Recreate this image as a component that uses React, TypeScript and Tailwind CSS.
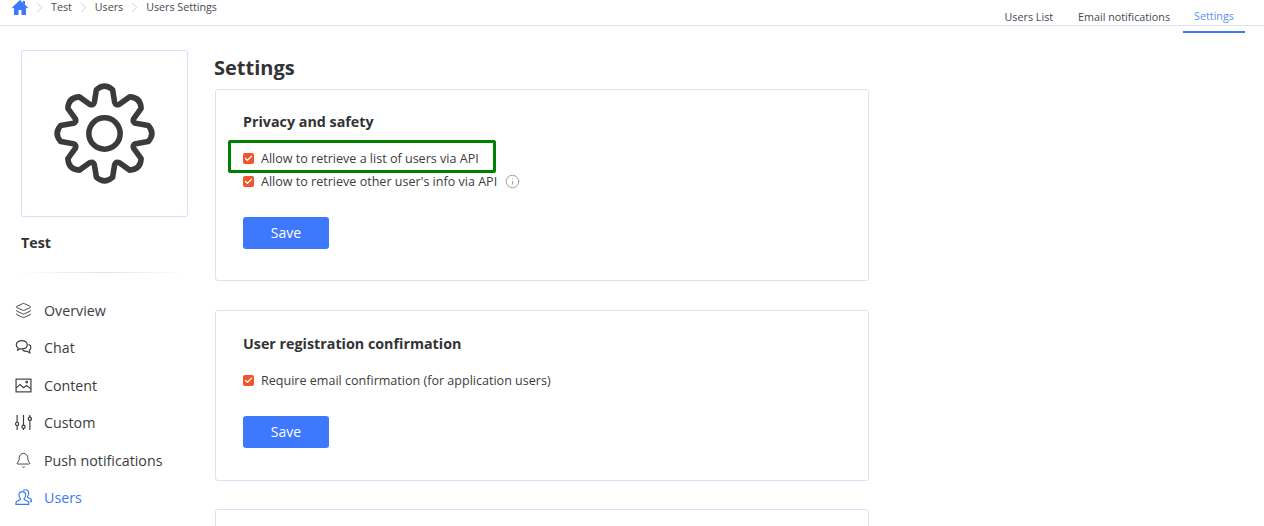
import { Bell, Check, ChevronRight, Info, Layers } from "lucide-react";
import type { ReactNode } from "react";

const font = { fontFamily: '"Open Sans", sans-serif' };

function gearPath() {
  const cx = 50;
  const cy = 50;
  const pt = (deg: number, r: number) => {
    const a = ((deg - 90) * Math.PI) / 180;
    return `${(cx + r * Math.cos(a)).toFixed(2)} ${(cy + r * Math.sin(a)).toFixed(2)}`;
  };
  let d = "";
  for (let i = 0; i < 8; i++) {
    const a = i * 45;
    d += `${i === 0 ? "M" : "L"}${pt(a - 18, 32.5)} L${pt(a - 10.5, 44)} Q${pt(a, 50.5)} ${pt(a + 10.5, 44)} L${pt(a + 18, 32.5)} Q${pt(a + 22.5, 29.5)} ${pt(a + 27, 32.5)} `;
  }
  return d + "Z";
}

function ChatIcon({ className }: { className?: string }) {
  return (
    <svg viewBox="0 0 16 16" fill="none" stroke="currentColor" strokeWidth="1.1" className={className}>
      <path d="M6.500 1.500c3 0 5 1.700 5 3.900s-2 3.900-5 3.900c-.6 0-1.100-.1-1.700-.2L2.600 10.500l.3-2.200C1.800 7.600 1.200 6.600 1.200 5.400 1.200 3.200 3.500 1.500 6.500 1.500z" />
      <path d="M12.700 5c1.300.6 2.200 1.700 2.200 3 0 1-.5 1.900-1.400 2.500l.4 2.600-2.600-1.500c-1.800.2-3.400-.4-4.400-1.500" />
    </svg>
  );
}

function UsersIcon({ className }: { className?: string }) {
  return (
    <svg viewBox="0 0 16 16" fill="none" stroke="currentColor" strokeWidth="1.1" className={className}>
      <path d="M6.800 2.500c2 0 3.200 1.400 3.200 3.300 0 1.300-.5 2.500-1.300 3.200v1l3.300 1.500c.6.300.9.800.9 1.400v1.600H.9v-1.600c0-.6.300-1.100.9-1.400L5 10v-1C4.200 8.300 3.700 7.100 3.700 5.800c0-1.900 1.200-3.300 3.100-3.300z" />
      <path d="M7.500 1.200C8.200.8 9 .7 9.700.7c2 0 3.200 1.400 3.200 3.300 0 1.200-.4 2.300-1.100 3v1l2.700 1.300c.6.300.9.800.9 1.400v1.300h-1.600" />
    </svg>
  );
}

function PictureIcon({ className }: { className?: string }) {
  return (
    <svg viewBox="0 0 16 16" fill="none" stroke="currentColor" strokeWidth="1.1" className={className}>
      <rect x="1" y="2" width="14" height="12" />
      <path d="M1 10.500 4.800 7l3.400 3 2.600-2 4.200 3.200" />
      <circle cx="11" cy="4.800" r=".8" />
    </svg>
  );
}

function SlidersIcon({ className }: { className?: string }) {
  return (
    <svg viewBox="0 0 16 16" fill="none" stroke="currentColor" strokeWidth="1.1" className={className}>
      <path d="M2 1v6.800M2 10.800V15M8 1v9.500M8 13.500V15M14 1v2M14 6v9" />
      <circle cx="2" cy="9.300" r="1.500" />
      <circle cx="8" cy="12" r="1.500" />
      <circle cx="14" cy="4.500" r="1.500" />
    </svg>
  );
}

function NavItem({ icon, label, active }: { icon: ReactNode; label: string; active?: boolean }) {
  return (
    <div className={`flex h-[37.5px] items-center gap-[12px] pl-[15px] text-[14.25px] ${active ? "text-[#3e78f8]" : "text-[#3c3c40]"}`}>
      {icon}
      <span>{label}</span>
    </div>
  );
}

function CheckRow({ label, info }: { label: string; info?: boolean }) {
  return (
    <div className="flex h-[23px] items-center text-[12.550px] text-[#3c3c40]">
      <span className="mr-[7px] flex h-[11px] w-[11px] items-center justify-center rounded-[2px] bg-[#f0562a]">
        <Check size={9} strokeWidth={3.5} className="text-white" />
      </span>
      <span className="pt-[2px]">{label}</span>
      {info ? <Info size={15} strokeWidth={1.1} className="ml-[7.500px] text-[#77777a]" /> : null}
    </div>
  );
}

function SaveButton() {
  return (
    <button className="h-[32px] w-[86px] rounded-[3px] bg-[#3e78fd] pb-[1px] text-[14px] text-white">Save</button>
  );
}

function Crumb({ label }: { label: string }) {
  return (
    <>
      <ChevronRight size={17} strokeWidth={1} className="mx-[3px] text-[#c4c4c4]" />
      <span>{label}</span>
    </>
  );
}

export default function App() {
  const iconClass = "h-[17px] w-[17px]";
  return (
    <div style={font} className="relative h-[526px] w-[1264px] overflow-hidden bg-white text-[#333336]">
      <div className="relative flex h-[26px] items-start justify-between border-b border-[#dbe4f3]">
        <div className="flex h-[15px] items-center pl-[12px] text-[10.700px] text-[#48484c]">
          <svg viewBox="0 0 16 15" className="h-[15px] w-[16px] text-[#3e78fd]" fill="currentColor">
            <path d="M8 0 0 7.500l.8.900L2 7.400V15h4.500V10h3v5H14V7.400l1.200 1 .8-.900L13 4.700V1h-2v1.800z" />
          </svg>
          <Crumb label="Test" />
          <Crumb label="Users" />
          <Crumb label="Users Settings" />
        </div>
        <div className="mr-[19px] flex text-[10.750px] text-[#48484c]">
          <div className="flex h-[33px] items-start pt-[9px] pr-[25px]">Users List</div>
          <div className="flex h-[33px] items-start pt-[9px] pr-[13px]">Email notifications</div>
          <div className="flex h-[33px] w-[62px] justify-center border-b-2 border-[#3e78fd] pt-[8px] text-[#5f8ffb]">Settings</div>
        </div>
      </div>

      <div className="flex">
        <aside className="w-[214px] shrink-0">
          <div className="ml-[21px] mt-[24px] flex h-[167px] w-[167px] items-center justify-center rounded-[2px] border border-[#d6e2f6]">
            <svg viewBox="0 0 100 100" className="mr-[1px] h-[101px] w-[101px] text-[#3b3b3b]" fill="none" stroke="currentColor" strokeWidth="5.500" strokeLinejoin="round">
              <path d={gearPath()} />
              <circle cx="50" cy="50" r="15.500" />
            </svg>
          </div>
          <div className="ml-[21px] mt-[16px] text-[14.300px] font-bold leading-[20px]">Test</div>
          <div className="ml-[15px] mt-[19px] h-px w-[175px] bg-gradient-to-r from-transparent via-[#dbe4f3] to-transparent" />
          <nav className="mt-[18.600px]">
            <NavItem icon={<Layers size={17} strokeWidth={1.3} />} label="Overview" />
            <NavItem icon={<ChatIcon className={iconClass} />} label="Chat" />
            <NavItem icon={<PictureIcon className={iconClass} />} label="Content" />
            <NavItem icon={<SlidersIcon className={iconClass} />} label="Custom" />
            <NavItem icon={<Bell size={17} strokeWidth={1.3} />} label="Push notifications" />
            <NavItem icon={<UsersIcon className={iconClass} />} label="Users" active />
          </nav>
        </aside>

        <main className="w-[655px]">
          <h1 className="mt-[28px] h-[35px] text-[20px] font-bold leading-[27px]">Settings</h1>
          <section className="ml-px h-[192px] rounded-[3px] border border-[#d6e2f6] pl-[27px] pt-[22px]">
            <h2 className="text-[14.300px] font-bold leading-[20px]">Privacy and safety</h2>
            <div className="mt-[15px]">
              <CheckRow label="Allow to retrieve a list of users via API" />
              <CheckRow label="Allow to retrieve other user's info via API" info />
            </div>
            <div className="mt-[24px]">
              <SaveButton />
            </div>
          </section>
          <section className="ml-px mt-[29px] h-[171px] rounded-[3px] border border-[#d6e2f6] pl-[27px] pt-[23px]">
            <h2 className="text-[14.300px] font-bold leading-[20px]">User registration confirmation</h2>
            <div className="mt-[15px]">
              <CheckRow label="Require email confirmation (for application users)" />
            </div>
            <div className="mt-[24px]">
              <SaveButton />
            </div>
          </section>
          <section className="ml-px mt-[28px] h-[100px] rounded-[3px] border border-[#d6e2f6]" />
        </main>
      </div>

      <div className="absolute left-[228px] top-[140px] h-[33px] w-[268px] rounded-[2px] border-[3px] border-[#008000]" />
    </div>
  );
}
